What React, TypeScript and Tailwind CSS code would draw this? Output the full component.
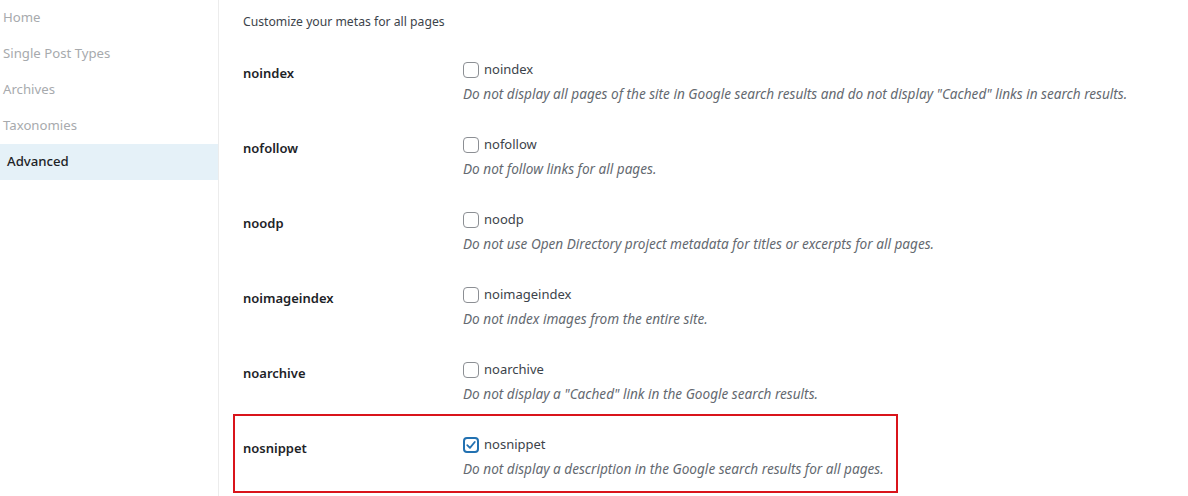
const navItems = ['Home', 'Single Post Types', 'Archives', 'Taxonomies', 'Advanced']

const metas = [
  {
    name: 'noindex',
    desc: 'Do not display all pages of the site in Google search results and do not display "Cached" links in search results.',
    checked: false,
  },
  { name: 'nofollow', desc: 'Do not follow links for all pages.', checked: false },
  { name: 'noodp', desc: 'Do not use Open Directory project metadata for titles or excerpts for all pages.', checked: false },
  { name: 'noimageindex', desc: 'Do not index images from the entire site.', checked: false },
  { name: 'noarchive', desc: 'Do not display a "Cached" link in the Google search results.', checked: false },
  { name: 'nosnippet', desc: 'Do not display a description in the Google search results for all pages.', checked: true },
]

function Checkbox({ checked }: { checked: boolean }) {
  return (
    <span
      className={`flex h-4 w-4 shrink-0 items-center justify-center rounded-[4px] bg-white ${
        checked ? 'border-2 border-[#2271b1]' : 'border border-[#8c8f94]'
      }`}
    >
      {checked && (
        <svg viewBox="0 0 16 16" className="h-[14px] w-[14px]">
          <path d="M3 8.2 L6.6 11.8 L13 4" fill="none" stroke="#2271b1" strokeWidth="2.4" strokeLinecap="round" strokeLinejoin="round" />
        </svg>
      )}
    </span>
  )
}

export default function App() {
  return (
    <div className="flex h-[496px] w-[1188px] overflow-hidden bg-white font-['Noto_Sans',sans-serif] text-[13px]">
      <aside className="w-[219px] shrink-0 border-r border-[#ececec]">
        <ul>
          {navItems.map((item) => (
            <li
              key={item}
              className={`flex h-9 items-center pb-[1px] text-[13.2px] ${
                item === 'Advanced'
                  ? 'bg-[#e5f1f8] pl-[7px] font-medium text-[#1d2327]'
                  : 'pl-[3px] text-[#a7aaad]'
              }`}
            >
              {item}
            </li>
          ))}
        </ul>
      </aside>

      <main className="flex-1 pl-[14px]">
        <p className="flex h-[39px] items-center pt-[6px] pl-[10px] text-[12.2px] text-[#3c434a]">
          Customize your metas for all pages
        </p>
        {metas.map((m) => (
          <div
            key={m.name}
            className={`flex w-[665px] border-2 pl-[8px] ${
              m.name === 'nosnippet' ? 'h-[79px] border-[#d9141b]' : 'h-[75px] border-transparent'
            }`}
          >
            <div className="w-[220px] shrink-0 pt-[23px] text-[13px] font-semibold text-[#1d2327]">{m.name}</div>
            <div className="whitespace-nowrap pt-[19px]">
              <label className="flex items-center gap-[5px] text-[13px] text-[#3c434a]">
                <Checkbox checked={m.checked} />
                {m.name}
              </label>
              <p className="mt-[5px] text-[13.6px] italic leading-[18px] text-[#646970]">{m.desc}</p>
            </div>
          </div>
        ))}
      </main>
    </div>
  )
}
